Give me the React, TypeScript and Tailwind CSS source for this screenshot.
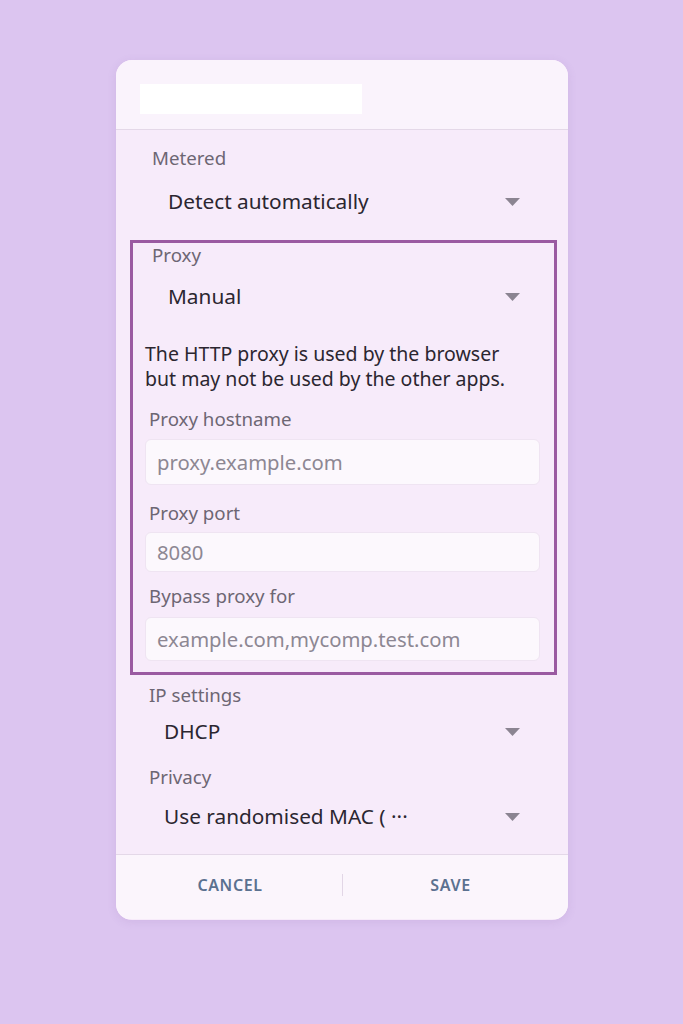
import React from 'react';

const font = { fontFamily: '"Noto Sans", "Open Sans", sans-serif' };

const Arrow: React.FC = () => (
  <svg width="15" height="8" viewBox="0 0 15 8" className="shrink-0">
    <path d="M0 0 L15 0 L7.5 8 Z" fill="#8b8491" />
  </svg>
);

const Label: React.FC<{ text: string; className?: string }> = ({ text, className = '' }) => (
  <div className={`leading-[24px] text-[18.7px] text-[#6d6673] ${className}`}>{text}</div>
);

const Select: React.FC<{ value: string; className?: string }> = ({ value, className = '' }) => (
  <div className={`h-[44px] flex items-center justify-between ${className}`}>
    <span className="text-[20.8px] text-[#2b2630]">{value}</span>
    <Arrow />
  </div>
);

const Field: React.FC<{ placeholder: string; h: string }> = ({ placeholder, h }) => (
  <div
    className={`${h} ml-[12px] w-[395px] rounded-[6px] bg-[#fcf8fd] border border-[#efe4f2] flex items-center pl-[11px] text-[20.3px] text-[#8d8793]`}
  >
    {placeholder}
  </div>
);

export default function App() {
  return (
    <div className="min-h-[1024px] w-full bg-[#dcc5f0] pt-[60px]" style={font}>
      <div className="mx-auto w-[452px] h-[860px] rounded-[16px] bg-[#f7ebfa] overflow-hidden shadow-[0_2px_10px_rgba(120,80,160,0.12)] relative left-[0.5px]">
        {/* header */}
        <div className="h-[70px] bg-[#faf3fc] border-b border-[#e4d8e8] pt-[24px] pl-[24px]">
          <div className="w-[222px] h-[30px] bg-white" />
        </div>

        {/* metered */}
        <div className="pl-[36px] pt-[16px]">
          <Label text="Metered" className="h-[24px]" />
          <Select value="Detect automatically" className="mt-[10px] pl-[16px] pr-[48px]" />
        </div>

        {/* proxy box */}
        <div className="mt-[16px] ml-[14px] w-[427px] h-[435px] border-[3px] border-[#9a5aa1]">
          <Label text="Proxy" className="ml-[19px] h-[18px] leading-[14px]" />
          <Select value="Manual" className="mt-[14px] pl-[35px] pr-[34px]" />
          <div className="mt-[22px] ml-[12px] text-[19.5px] leading-[25px] text-[#2b2630]">
            The HTTP proxy is used by the browser
            <br />
            but may not be used by the other apps.
          </div>
          <Label text="Proxy hostname" className="h-[24px] mt-[16px] ml-[16px]" />
          <div className="mt-[8px]">
            <Field placeholder="proxy.example.com" h="h-[46px]" />
          </div>
          <Label text="Proxy port" className="h-[24px] mt-[16px] ml-[16px]" />
          <div className="mt-[7px]">
            <Field placeholder="8080" h="h-[40px]" />
          </div>
          <Label text="Bypass proxy for" className="h-[24px] mt-[12px] ml-[16px]" />
          <div className="mt-[9px]">
            <Field placeholder="example.com,mycomp.test.com" h="h-[44px]" />
          </div>
        </div>

        {/* ip / privacy */}
        <div className="pl-[33px] pt-[8px]">
          <Label text="IP settings" className="h-[24px]" />
          <Select value="DHCP" className="mt-[3px] pl-[15px] pr-[48px]" />
          <Label text="Privacy" className="h-[24px] mt-[11px]" />
          <Select value="Use randomised MAC ( ···" className="mt-[6px] pl-[15px] pr-[48px]" />
        </div>

        {/* footer */}
        <div className="mt-[15px] h-[65px] pb-[4px] bg-[#fbf5fc] border-t border-[#e4d8e8] flex items-center">
          <div className="w-[226px] pl-[2px] text-center text-[16px] font-semibold tracking-[0.6px] text-[#5b7190]">CANCEL</div>
          <div className="w-px h-[22px] bg-[#e2d6e6]" />
          <div className="flex-1 pr-[10px] text-center text-[16px] font-semibold tracking-[0.6px] text-[#5b7190]">SAVE</div>
        </div>
      </div>
    </div>
  );
}
